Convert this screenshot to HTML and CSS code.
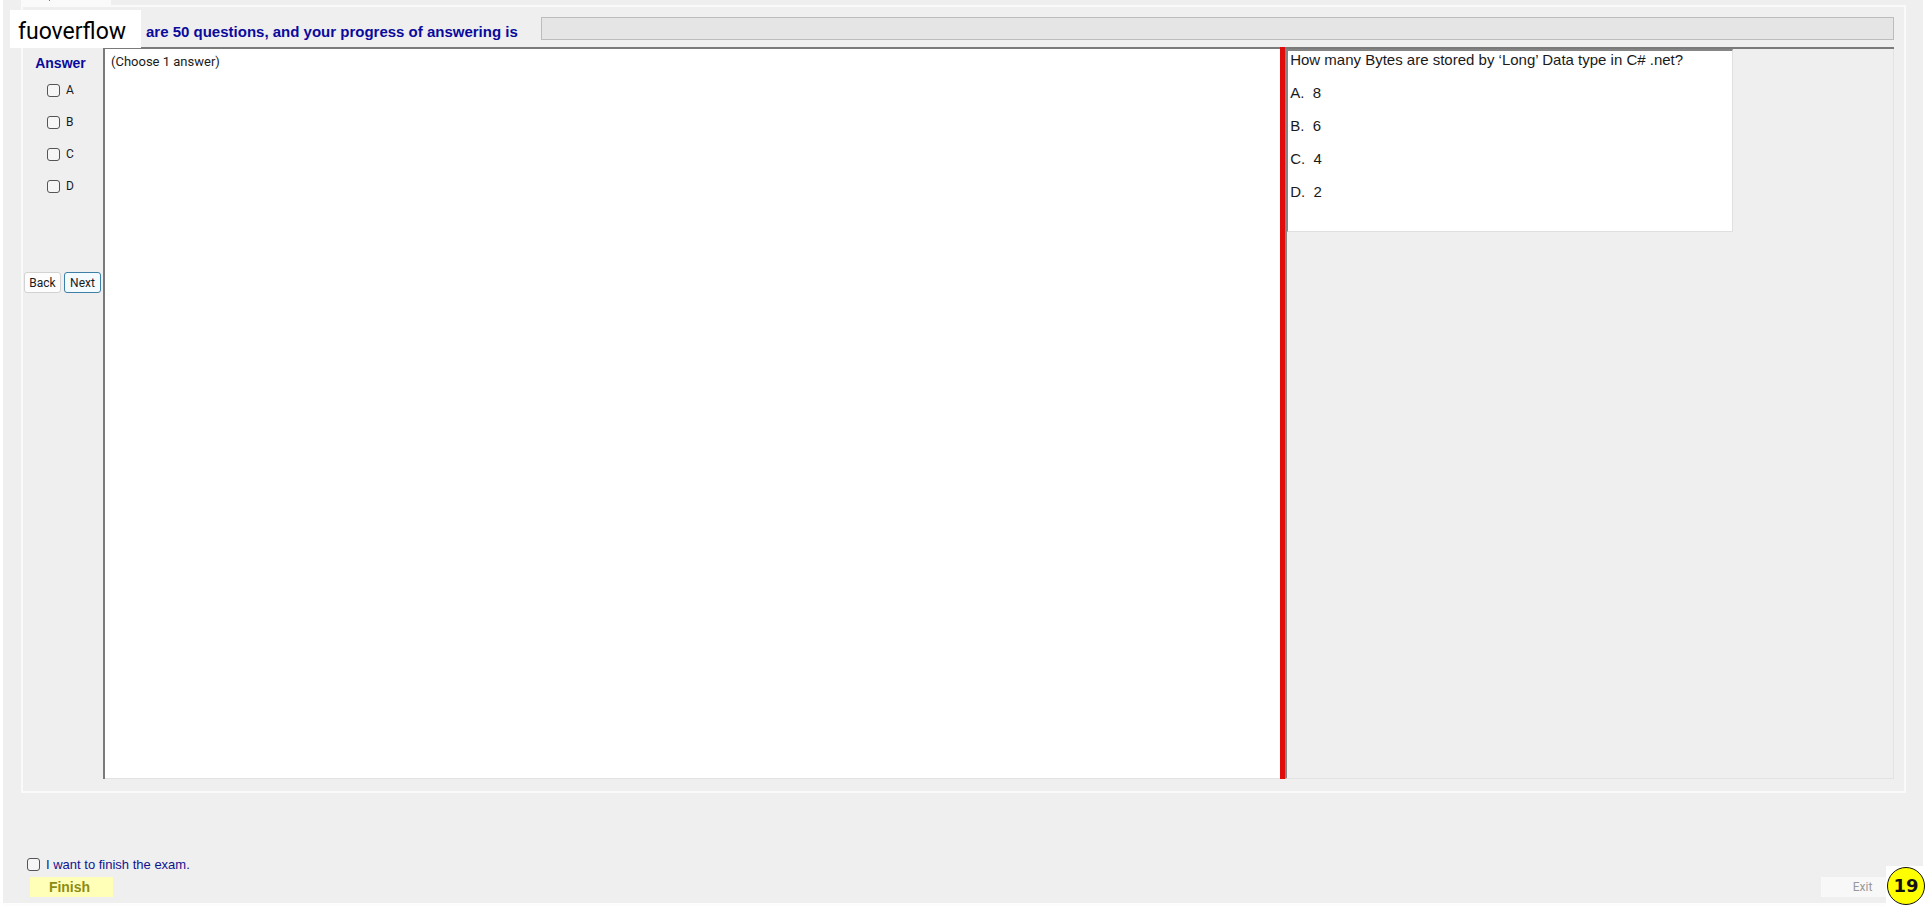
FILE: index.html
```
<!DOCTYPE html>
<html lang="en">
<head>
<meta charset="utf-8">
<title>Exam</title>
<link rel="stylesheet" href="styles.css">
</head>
<body>
<main class="window">
  <div class="tab-strip"><div class="tab"></div></div>
  <section class="tab-page">
    <div class="brand">fuoverflow</div>
    <header class="progress-row">
      <span class="progress-label" id="progress-label">are 50 questions, and your progress of answering is</span>
      <div class="progress" role="progressbar" aria-labelledby="progress-label" aria-valuemin="0" aria-valuemax="50" aria-valuenow="0"></div>
    </header>
    <div class="workspace">
      <aside class="answers">
        <h2 class="answers-title">Answer</h2>
        <div class="choices">
          <label class="choice"><input class="check" type="checkbox">A</label>
          <label class="choice"><input class="check" type="checkbox">B</label>
          <label class="choice"><input class="check" type="checkbox">C</label>
          <label class="choice"><input class="check" type="checkbox">D</label>
        </div>
        <nav class="nav">
          <button class="nav-button" type="button">Back</button>
          <button class="nav-button nav-next" type="button">Next</button>
        </nav>
      </aside>
      <div class="split">
        <div class="pane-left">(Choose 1 answer)</div>
        <div class="splitter"></div>
        <div class="pane-right">
          <article class="question">
            <p class="line">How many Bytes are stored by ‘Long’ Data type in C# .net?</p>
            <p class="line">A.&nbsp; 8</p>
            <p class="line">B.&nbsp; 6</p>
            <p class="line">C.&nbsp; 4</p>
            <p class="line">D.&nbsp; 2</p>
          </article>
        </div>
      </div>
    </div>
  </section>
  <footer class="footer">
    <div class="finish-group">
      <label class="finish-label"><input class="check" type="checkbox">I want to finish the exam.</label>
      <button class="finish" type="button">Finish</button>
    </div>
    <button class="exit" type="button">Exit</button>
  </footer>
  <div class="badge-box"><span class="badge">19</span></div>
</main>
</body>
</html>
```
FILE: styles.css
```
* { box-sizing: border-box; }

body {
  margin: 0;
  background: #fff;
  color: #1a1a1a;
  font-family: "Liberation Sans", Arial, sans-serif;
}

.window {
  position: relative;
  display: flex;
  flex-direction: column;
  min-height: 100vh;
  margin: 0 3px;
  padding: 0 17px 0 18px;
  background: #efefef;
  border-bottom: 3px solid #fdfdfd;
}

.tab-strip { height: 5px; }

.tab {
  position: relative;
  width: 90px;
  height: 5px;
  background: #fafafa;
}

.tab::after {
  content: "";
  position: absolute;
  left: 28px;
  top: 0;
  width: 1px;
  height: 1px;
  background: #777;
}

.tab-page {
  flex: 1;
  display: flex;
  flex-direction: column;
  padding: 10px 10px 12px 1px;
  border: 2px solid #fafafa;
}

.brand {
  position: absolute;
  left: 7px;
  top: 10px;
  width: 131px;
  height: 38px;
  padding-left: 8px;
  background: #fff;
  color: #000;
  font: 23px/44px Roboto, sans-serif;
}

.progress-row {
  display: flex;
  align-items: flex-end;
  gap: 16px;
  height: 23px;
  margin-bottom: 7px;
  padding-left: 122px;
}

.progress-label {
  min-width: 379px;
  color: #0a0a9c;
  font-size: 15px;
  font-weight: bold;
  line-height: 16px;
}

.progress {
  flex: 1;
  height: 23px;
  background: #e5e5e5;
  border: 1px solid #bcbcbc;
}

.workspace {
  flex: 1;
  display: flex;
}

.answers {
  width: 79px;
  flex: none;
}

.answers-title {
  margin: 8px 0 11px;
  padding-right: 6px;
  color: #0a0a9c;
  font-size: 14px;
  line-height: 16px;
  text-align: center;
}

.choices {
  display: flex;
  flex-direction: column;
  gap: 16px;
  padding-left: 23px;
  font: 12px/16px Roboto, sans-serif;
}

.choice {
  display: flex;
  align-items: center;
  gap: 6px;
}

.check {
  appearance: none;
  flex: none;
  width: 13px;
  height: 13px;
  margin: 0;
  background: #f6f6f6;
  border: 1px solid #555;
  border-radius: 3px;
}

.nav {
  display: flex;
  gap: 3px;
  margin-top: 78px;
}

.nav-button {
  width: 37px;
  height: 21px;
  padding: 0;
  background: #fdfdfd;
  border: 1px solid #d2d2d2;
  border-radius: 3px;
  color: #1a1a1a;
  font: 12px/16px Roboto, sans-serif;
}

.nav-next {
  background: #f4fbff;
  border-color: #3d7fa6;
}

.split {
  flex: 1;
  display: flex;
  border-top: 2px solid #7a7a7a;
  border-left: 2px solid #7a7a7a;
}

.pane-left {
  flex: 1173;
  padding: 4px 6px;
  background: #fff;
  border-bottom: 1px solid #e2e2e2;
  font: 13px/18px Roboto, sans-serif;
}

.splitter {
  flex: none;
  width: 5px;
  margin-top: -2px;
  background: #e00b0b;
}

.pane-right {
  flex: 611;
  border: 1px solid #e2e2e2;
  border-width: 0 1px 1px 0;
  border-left: 2px solid #858585;
}

.question {
  width: 446px;
  max-width: 100%;
  padding: 0 2px 30px;
  background: #fff;
  border: 1px solid #e0e0e0;
  border-top: 2px solid #858585;
  border-left: 1px solid #858585;
}

.line {
  margin: 0 0 15px;
  font-size: 15px;
  line-height: 18px;
}

.line:last-child { margin-bottom: 0; }

.footer {
  display: flex;
  align-items: flex-end;
  justify-content: space-between;
  padding: 63px 2px 6px 6px;
}

.finish-group {
  display: flex;
  flex-direction: column;
  gap: 4px;
}

.finish-label {
  display: flex;
  align-items: center;
  gap: 6px;
  color: #12128f;
  font-size: 13px;
  line-height: 17px;
}

.finish {
  width: 83px;
  height: 20px;
  margin-left: 3px;
  padding: 0 4px 0 0;
  background: #ffffb8;
  border: 0;
  color: #8c8c14;
  font: bold 14px/20px "Liberation Sans", Arial, sans-serif;
}

.exit {
  width: 83px;
  height: 20px;
  padding: 0;
  background: #f8f8f8;
  border: 0;
  color: #999;
  font: 12px/20px Roboto, sans-serif;
}

.badge-box {
  position: absolute;
  right: -3px;
  bottom: -3px;
  width: 40px;
  height: 40px;
  padding: 1px;
  background: #fff;
}

.badge {
  display: block;
  width: 38px;
  height: 38px;
  background: #ff0;
  border: 1px solid #111;
  border-radius: 50%;
  color: #111;
  font: bold 18px/36px "DejaVu Sans", Verdana, sans-serif;
  text-align: center;
}
```
